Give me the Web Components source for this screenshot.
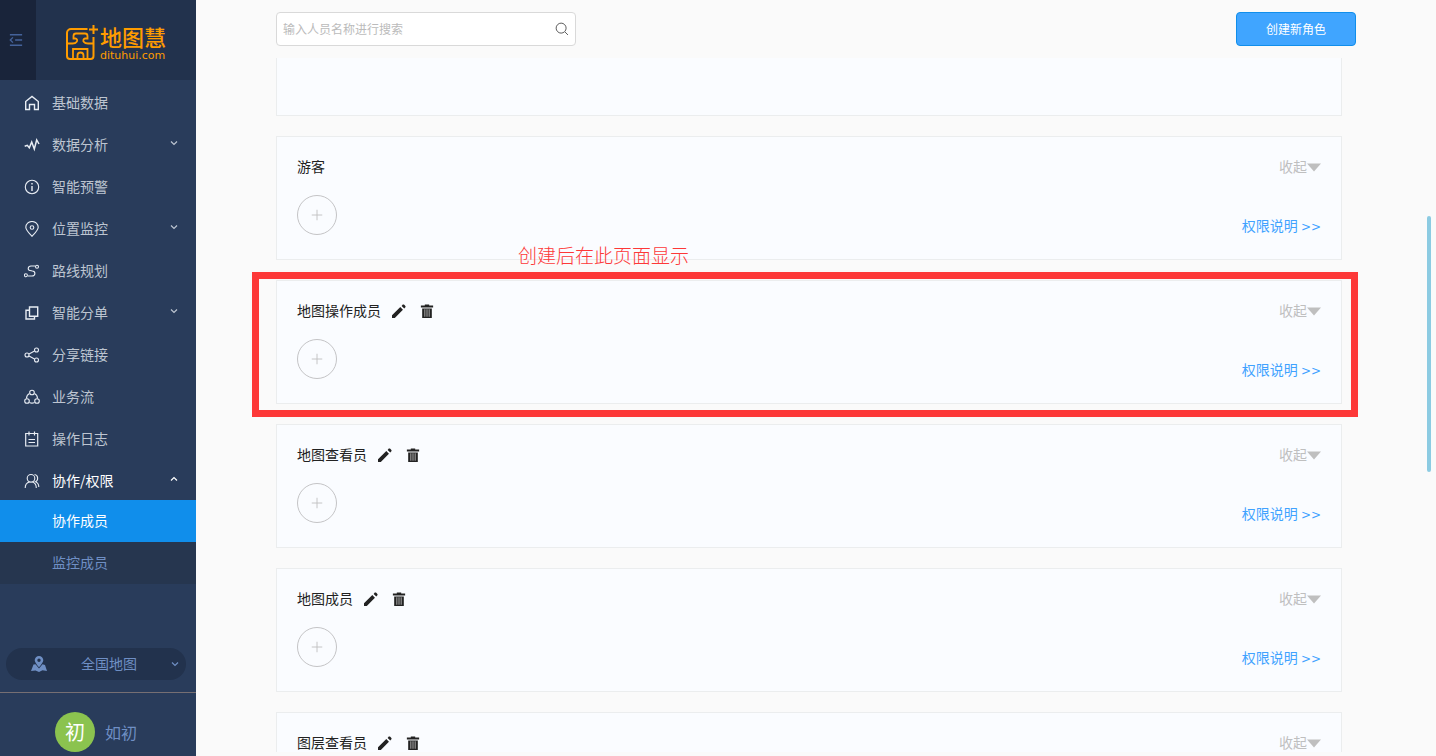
<!DOCTYPE html>
<html lang="zh-CN">
<head>
<meta charset="utf-8">
<title>地图慧 - 协作成员</title>
<style>
  body {
    margin: 0;
    font: 14px/20px "Noto Sans CJK SC", "Liberation Sans", sans-serif;
    background: #fafafa;
    color: #222;
  }
</style>
</head>
<body>
<team-page></team-page>

<script>
const icons = {
  fold: '<path d="M1 2h14M7 8h8M1 14h14M4.500 5 1.500 8l3 3" stroke-width="1.600"/>',
  home: '<path d="M1.700 6.500 8 1.500l6.300 5v8h-3.800V9.500h-5v5H1.700z" stroke-width="1.400"/>',
  chart: '<path d="m.7 9.300 2.600-1 2 2.400L7.700 5l2.600 7 2.400-9L15 7" stroke-width="1.500"/>',
  info: '<circle cx="8" cy="8" r="6.700"/><path d="M8 7v5M8 4v1.500" stroke-width="1.400"/>',
  pin: '<path d="M8 15.300C4.500 11.500 1.800 9 1.800 6.300a6.200 5.800 0 0 1 12.400 0C14.200 9 11.500 11.500 8 15.300z"/><circle cx="8" cy="6.500" r="1.800"/>',
  route: '<circle cx="1.900" cy="12.300" r="1.500"/><circle cx="13" cy="3.700" r="1.500"/><path d="M11 3H7C3.500 3 3.500 7 6 7.500l2.500.5c3.500.5 3 5-.5 5H4"/>',
  copy: '<path d="M5.500 2h8.200v9.200H5.500zM5 5.200H2v8.800h8.500v-2.500" stroke-width="1.400"/>',
  share: '<circle cx="3" cy="8" r="2"/><circle cx="12.500" cy="3" r="2"/><circle cx="12.500" cy="13" r="2"/><path d="m5 7 5.500-3M5 9l5.500 3"/>',
  flow: '<circle cx="8" cy="3.500" r="2.300"/><circle cx="3" cy="12" r="2.300"/><circle cx="13" cy="12" r="2.300"/><path d="M5.500 4.500C3.500 5.500 2.500 7.500 2.500 9.500M10.500 4.500c2 1 3 3 3 5M5.500 13.500c1.500.8 3.500.8 5 0"/>',
  log: '<path d="M1.700 2.500h12V15h-12zM5 .5v4M10.500.5v4M4.500 8.500h6.500M4.500 11.500h6.500" stroke-width="1.200"/>',
  users: '<circle cx="7" cy="5.300" r="3.800"/><path d="M1.200 15c0-3.500 2-5.500 4.300-6M8.500 9c2.500.8 3.800 3 3.800 6M10.500 1.500c4 .5 4 6 1 7.300 2 .8 3.300 2.500 3.300 5.200"/>',
  down: '<path d="m2 5 6 6 6-6" stroke-width="2.400"/>',
  up: '<path d="m2 11 6-6 6 6" stroke-width="2.400"/>',
  search: '<circle cx="7" cy="7" r="5.700"/><path d="m11.500 11.500 3.300 3.300"/>',
  plus: '<path d="M8 1v14M1 8h14" stroke-width="1.200"/>',
  map: '<path fill="currentColor" stroke="none" fill-rule="evenodd" d="M8 0a4.300 4.300 0 0 1 4.300 4.300c0 2-2.300 4.500-4.300 7-2-2.500-4.300-5-4.300-7A4.300 4.300 0 0 1 8 0zm0 2.600a1.700 1.700 0 1 0 0 3.400 1.700 1.700 0 0 0 0-3.400zM2.500 8.500l2-.3L8 12.500l3.500-4.300 2.500.8 2 6-4.500-.8L8 16l-3.500-1.500L0 15z"/>',
  edit: '<path fill="currentColor" stroke="none" d="M0 16v-3.200L9.500 3.500l3 3L3.200 16zM11 2.200 12.300.7q.7-.5 1.400 0l1.600 1.700q.5.700 0 1.400L14 5z"/>',
  trash: '<path fill="currentColor" stroke="none" d="M5.500.5h5v1.300H15V4H1V1.800h4.500zM2.500 5h11v11h-11z"/><path stroke="#999" stroke-width="1.300" d="M5.500 6v8.500M8 6v8.500M10.500 6v8.500"/>',
  arrow: '<path fill="currentColor" stroke="none" d="M0 4h16L8 13z"/>'
}

// small helper: class with an open shadow root filled from a template
function define(name, html, setup) {
  const template = document.createElement('template')
  template.innerHTML = html
  customElements.define(name, class extends HTMLElement {
    constructor() {
      super()
      this.attachShadow({ mode: 'open' })
      this.shadowRoot.appendChild(template.content.cloneNode(true))
    }

    connectedCallback() {
      if (setup) setup(this, this.shadowRoot)
    }
  })
}

define('ui-icon', `
<style>
  :host {
    display: block;
    flex: none;
    width: 16px;
    height: 16px;
  }

  svg {
    display: block;
    width: 100%;
    height: 100%;
    fill: none;
    stroke: currentColor;
    stroke-width: 1.1;
  }
</style>
<svg viewBox="0 0 16 16" aria-hidden="true"></svg>
`, (host, root) => {
  root.querySelector('svg').innerHTML = icons[host.getAttribute('name')]
})

define('brand-logo', `
<style>
  :host {
    display: flex;
    align-items: center;
    gap: 2px;
    color: #ff9c00;
  }

  svg {
    width: 33px;
    height: 36px;
    fill: none;
    stroke: currentColor;
    stroke-width: 2;
  }

  .name {
    font-size: 22px;
    font-weight: 500;
    line-height: 26px;
  }

  .site {
    font: 11px/14px "DejaVu Sans", sans-serif;
  }
</style>
<svg viewBox="0 0 33 36" aria-hidden="true">
  <path d="M22.500 4H6a4 4 0 0 0-4 4v23a3 3 0 0 0 3 3h20.500a3 3 0 0 0 3-3V12M28.500 0v9M24 4.500h9"/>
  <path d="M10 13.500H8.500V11a2.500 2.500 0 0 1 2.500-2.500h9a2.500 2.500 0 0 1 2.500 2.500v2.500H20a2 2 0 0 0-1 3.500q1 1.500 4 1.500h5M10 13.500a2 2 0 0 1 1.500 3.500q-1 1.500-4 1.500H2M8 34V24h14.500v10M12.500 34v-3.500a3 3 0 0 1 6 0V34" stroke-width="1.800"/>
</svg>
<div>
  <div class="name">地图慧</div>
  <div class="site">dituhui.com</div>
</div>
`)

define('nav-item', `
<style>
  :host {
    display: block;
    color: #bdc5d1;
  }

  a {
    display: flex;
    height: 42px;
    box-sizing: border-box;
    padding: 4px 16px 0 24px;
    align-items: center;
    gap: 12px;
    color: inherit;
    text-decoration: none;
  }

  .label {
    flex: 1;
    padding-bottom: 2px;
  }

  .icon {
    color: #e8edf4;
  }

  .chevron {
    width: 8px;
    height: 8px;
    margin: 0 2px 4px 0;
  }

  :host([open]) {
    color: #fff;
  }

  :host([sub]) {
    color: #6f8fc4;
    background: #26364f;
  }

  :host([sub]) a {
    padding: 0 16px 0 52px;
  }

  :host([active]) {
    color: #fff;
    background: #108eeb;
  }
</style>
<a href="#"><span class="label"><slot></slot></span></a>
`, (host, root) => {
  const link = root.querySelector('a')
  if (host.hasAttribute('icon')) {
    link.insertAdjacentHTML('afterbegin', `<ui-icon class="icon" name="${host.getAttribute('icon')}"></ui-icon>`)
  }
  if (host.hasAttribute('more')) {
    const dir = host.hasAttribute('open') ? 'up' : 'down'
    link.insertAdjacentHTML('beforeend', `<ui-icon class="chevron" name="${dir}"></ui-icon>`)
  }
})

define('side-bar', `
<style>
  :host {
    display: flex;
    flex-direction: column;
    flex: none;
    width: 196px;
    background: #293c5b;
    color: #6f8fc4;
  }

  header {
    display: flex;
    height: 80px;
    background: #22324d;
  }

  button {
    border: 0;
    font: inherit;
    color: inherit;
    cursor: pointer;
  }

  .fold {
    width: 36px;
    padding: 0 13px 0 9px;
    background: #19243a;
    color: #44629a;
  }

  .fold ui-icon {
    width: 14px;
    height: 14px;
  }

  brand-logo {
    flex: 1;
    padding: 5px 0 0 29px;
  }

  nav {
    flex: 1;
  }

  .area {
    display: flex;
    align-items: center;
    height: 32px;
    margin: 0 10px 12px 6px;
    padding: 0 7px 0 25px;
    border-radius: 16px;
    background: #22324d;
  }

  .area span {
    flex: 1;
    padding-bottom: 2px;
  }

  .area ui-icon:last-child {
    width: 8px;
    height: 8px;
  }

  footer {
    display: flex;
    align-items: center;
    gap: 10px;
    padding: 19px 0 4px 55px;
    border-top: 1px solid #766f73;
    font-size: 16px;
  }

  .avatar {
    width: 40px;
    height: 40px;
    border-radius: 50%;
    background: #8bc34f;
    color: #fff;
    font-size: 20px;
    line-height: 40px;
    text-align: center;
  }
</style>
<header>
  <button class="fold" aria-label="折叠菜单"><ui-icon name="fold"></ui-icon></button>
  <brand-logo></brand-logo>
</header>
<nav>
  <nav-item icon="home">基础数据</nav-item>
  <nav-item icon="chart" more>数据分析</nav-item>
  <nav-item icon="info">智能预警</nav-item>
  <nav-item icon="pin" more>位置监控</nav-item>
  <nav-item icon="route">路线规划</nav-item>
  <nav-item icon="copy" more>智能分单</nav-item>
  <nav-item icon="share">分享链接</nav-item>
  <nav-item icon="flow">业务流</nav-item>
  <nav-item icon="log">操作日志</nav-item>
  <nav-item icon="users" more open>协作/权限</nav-item>
  <nav-item sub active>协作成员</nav-item>
  <nav-item sub>监控成员</nav-item>
</nav>
<button class="area">
  <ui-icon name="map"></ui-icon>
  <span>全国地图</span>
  <ui-icon name="down"></ui-icon>
</button>
<footer>
  <div class="avatar">初</div>
  <div>如初</div>
</footer>
`)

define('search-box', `
<style>
  :host {
    display: flex;
    align-items: center;
    width: 300px;
    height: 34px;
    box-sizing: border-box;
    padding: 0 6px;
    border: 1px solid #d9d9d9;
    border-radius: 4px;
    background: #fff;
  }

  input {
    flex: 1;
    min-width: 0;
    padding: 0;
    border: 0;
    outline: 0;
    background: none;
    font: inherit;
    font-size: 12px;
  }

  input::placeholder {
    color: #bbb;
  }

  button {
    padding: 0;
    border: 0;
    background: none;
    color: #555;
    cursor: pointer;
  }

  ui-icon {
    width: 14px;
    height: 14px;
  }
</style>
<input type="text" aria-label="搜索人员" placeholder="输入人员名称进行搜索">
<button aria-label="搜索"><ui-icon name="search"></ui-icon></button>
`)

define('role-card', `
<style>
  :host {
    display: block;
    position: relative;
    padding: 20px 20px 22px;
    border: 1px solid #ebedee;
    background: #fafcff;
  }

  header {
    display: flex;
    align-items: center;
    margin-bottom: 18px;
  }

  h3 {
    margin: 0 11px 0 0;
    padding-bottom: 2px;
    font: inherit;
    line-height: 18px;
  }

  button {
    padding: 0;
    border: 0;
    background: none;
    font: inherit;
    color: inherit;
    cursor: pointer;
  }

  .tools {
    display: flex;
    flex: 1;
    gap: 14px;
  }

  :host([builtin]) .tools button {
    display: none;
  }

  ui-icon {
    width: 14px;
    height: 14px;
  }

  .toggle {
    display: flex;
    align-items: center;
    color: #bfbfbf;
  }

  .toggle span {
    padding-bottom: 2px;
    line-height: 18px;
  }

  .body {
    display: flex;
    justify-content: space-between;
    min-height: 42px;
  }

  .add {
    display: grid;
    place-items: center;
    width: 40px;
    height: 40px;
    border: 1px solid #c4c4c6;
    border-radius: 50%;
    color: #bfbfbf;
  }

  .add ui-icon {
    width: 12px;
    height: 12px;
  }

  a {
    align-self: flex-end;
    margin-bottom: 2px;
    color: #40a2ff;
    text-decoration: none;
  }

  .more {
    font: 12px "DejaVu Sans", sans-serif;
  }

  :host([brief]) a {
    display: none;
  }
</style>
<header>
  <h3><slot></slot></h3>
  <div class="tools">
    <button aria-label="编辑"><ui-icon name="edit"></ui-icon></button>
    <button aria-label="删除"><ui-icon name="trash"></ui-icon></button>
  </div>
  <button class="toggle"><span>收起</span><ui-icon name="arrow"></ui-icon></button>
</header>
<div class="body">
  <button class="add" aria-label="添加成员"><ui-icon name="plus"></ui-icon></button>
  <a href="#">权限说明 <span class="more">&gt;&gt;</span></a>
</div>
<slot name="note"></slot>
`)

// red frame drawn over a card, with its caption above
define('mark-note', `
<style>
  :host {
    position: absolute;
    inset: -9px -17px -14px -25px;
    border: 7px solid #fd3838;
    color: #fd3838;
    pointer-events: none;
  }

  span {
    position: absolute;
    bottom: 100%;
    left: 259px;
    margin-bottom: 10px;
    font-size: 19px;
    line-height: 28px;
    font-weight: 300;
    white-space: nowrap;
  }
</style>
<span><slot></slot></span>
`)

define('team-page', `
<style>
  :host {
    display: flex;
    height: 100vh;
    overflow: hidden;
  }

  main {
    position: relative;
    display: flex;
    flex: 1;
    flex-direction: column;
    min-width: 0;
  }

  .toolbar {
    display: flex;
    justify-content: space-between;
    padding: 12px 80px;
  }

  .create {
    width: 120px;
    border: 1px solid #108eeb;
    border-radius: 4px;
    background: #40a5ff;
    color: #fff;
    font: inherit;
    font-size: 12px;
    cursor: pointer;
  }

  .list {
    display: flex;
    flex: 1;
    flex-direction: column;
    gap: 20px;
    min-height: 0;
    margin-bottom: 4px;
    padding: 0 94px 0 80px;
    overflow: hidden;
  }

  .list > * {
    flex: none;
  }

  .rest {
    height: 57px;
    border: 1px solid #ebedee;
    border-top: 0;
    background: #fafcff;
  }

  .thumb {
    position: absolute;
    top: 216px;
    right: 5px;
    width: 4px;
    height: 256px;
    border-radius: 2px;
    background: #8ccbe2;
  }
</style>
<side-bar></side-bar>
<main>
  <div class="toolbar">
    <search-box></search-box>
    <button class="create">创建新角色</button>
  </div>
  <div class="list">
    <div class="rest"></div>
    <role-card builtin>游客</role-card>
    <role-card>地图操作成员<mark-note slot="note">创建后在此页面显示</mark-note></role-card>
    <role-card>地图查看员</role-card>
    <role-card>地图成员</role-card>
    <role-card brief>图层查看员</role-card>
  </div>
  <div class="thumb"></div>
</main>
`)
</script>
</body>
</html>
